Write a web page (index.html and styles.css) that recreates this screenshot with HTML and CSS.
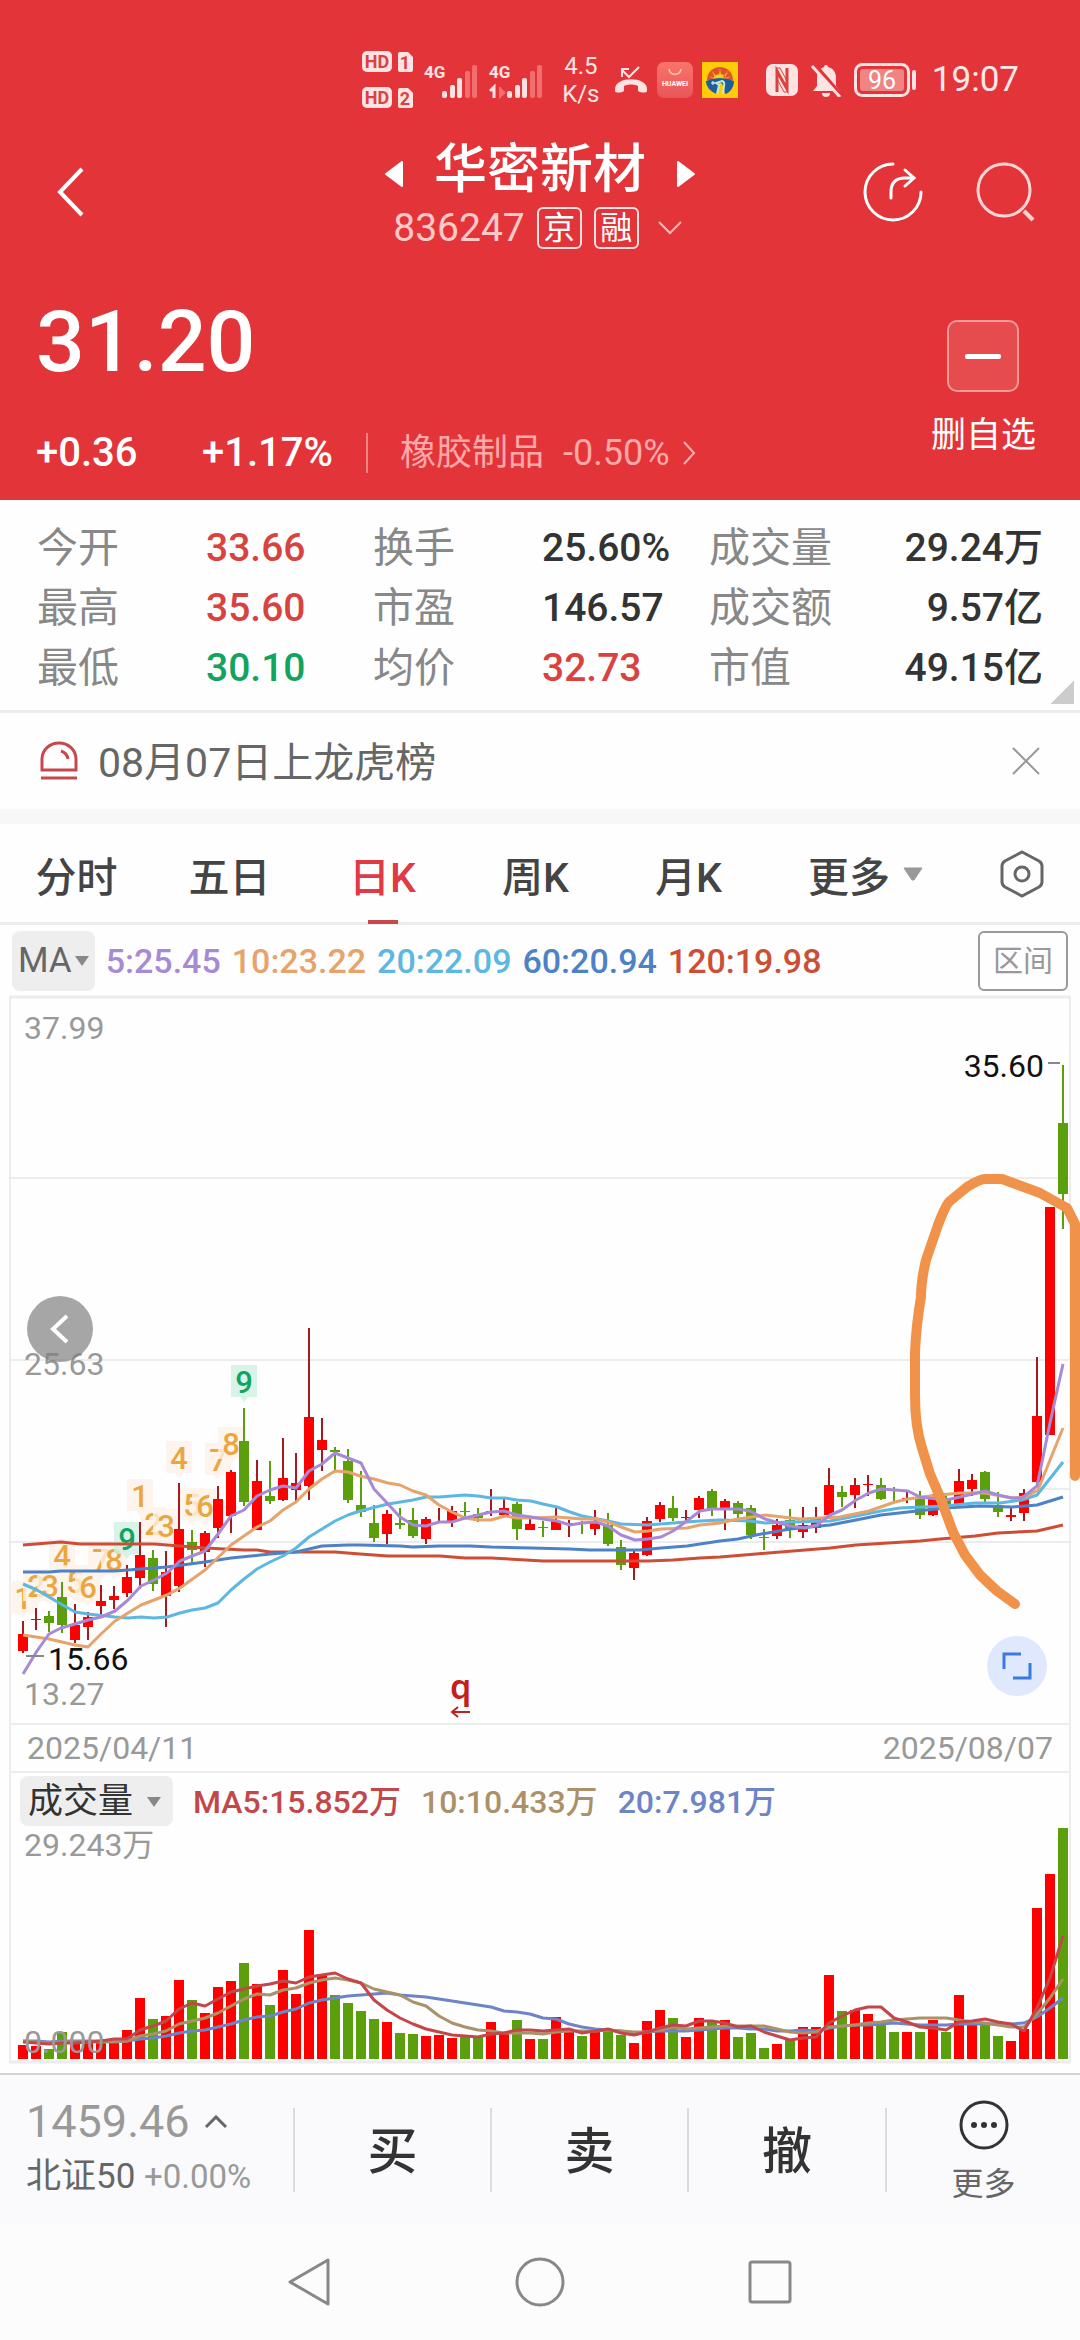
FILE: index.html
```html
<!DOCTYPE html>
<html lang="zh-CN">
<head>
<meta charset="utf-8">
<meta name="viewport" content="width=device-width, initial-scale=1">
<title>华密新材 836247</title>
<link rel="stylesheet" href="styles.css">
</head>
<body>
<header class="quote-head">
  <div class="status-bar">
    <svg class="st-hd" width="52" height="60" viewBox="0 0 52 60" aria-hidden="true">
      <rect x="0" y="1" width="30" height="21" rx="5" fill="#ffe3e3"/>
      <path d="M36 4a2 2 0 0 1 2-2h8l5 5v13a2 2 0 0 1-2 2H38a2 2 0 0 1-2-2z" fill="#ffe3e3"/>
      <rect x="0" y="37" width="30" height="21" rx="5" fill="#ffe3e3"/>
      <path d="M36 40a2 2 0 0 1 2-2h8l5 5v13a2 2 0 0 1-2 2H38a2 2 0 0 1-2-2z" fill="#ffe3e3"/>
      <g fill="#d8423f" font-size="18" font-weight="700" text-anchor="middle">
        <text x="15" y="18">HD</text><text x="43" y="19">1</text>
        <text x="15" y="54">HD</text><text x="43" y="55">2</text>
      </g>
    </svg>
    <svg class="st-sig" width="54" height="38" viewBox="0 0 54 38" aria-hidden="true">
      <text x="0" y="17" font-size="17" font-weight="700" fill="#ffe3e3">4G</text>
      <g fill="#ffe3e3"><rect x="18" y="30" width="5" height="7" rx="2"/><rect x="26" y="24" width="5" height="13" rx="2"/><rect x="33" y="17" width="5" height="20" rx="2"/></g>
      <g fill="#f16e6e"><rect x="41" y="10" width="5" height="27" rx="2"/><rect x="48" y="4" width="5" height="33" rx="2"/></g>
    </svg>
    <svg class="st-sig" width="54" height="38" viewBox="0 0 54 38" aria-hidden="true">
      <text x="0" y="17" font-size="17" font-weight="700" fill="#ffe3e3">4G</text>
      <path d="M5 37V26L1 30" fill="none" stroke="#ffe3e3" stroke-width="3"/><path d="M11 26v10l5-5" fill="#f16e6e" stroke="#f16e6e" stroke-width="2"/>
      <g fill="#ffe3e3"><rect x="18" y="30" width="5" height="7" rx="2"/><rect x="26" y="24" width="5" height="13" rx="2"/><rect x="33" y="17" width="5" height="20" rx="2"/></g>
      <g fill="#f16e6e"><rect x="41" y="10" width="5" height="27" rx="2"/><rect x="48" y="4" width="5" height="33" rx="2"/></g>
    </svg>
    <span class="st-speed">4.5<br>K/s</span>
    <svg class="st-call" width="34" height="30" viewBox="0 0 34 30" aria-hidden="true">
      <path d="M1 24c0-13 32-13 32 0v2c0 2-6 2-9 0v-5c-4-2-10-2-14 0v5c-3 2-9 2-9 0z" fill="#ffe3e3"/>
      <path d="M25 2L15 12 8 5M8 12V4h7" fill="none" stroke="#ffe3e3" stroke-width="2"/>
    </svg>
    <svg class="st-app" width="36" height="36" viewBox="0 0 36 36" aria-hidden="true">
      <defs><linearGradient id="hw" x2="0" y2="1"><stop stop-color="#fb7568"/><stop offset="1" stop-color="#e9555a"/></linearGradient></defs>
      <rect width="36" height="36" rx="7" fill="url(#hw)"/>
      <path d="M12 7c1 7 11 7 12 0" fill="none" stroke="#ffc9c3" stroke-width="1.5"/>
      <text x="18" y="24" font-size="7" font-weight="700" text-anchor="middle" fill="#fff">HUAWEI</text>
    </svg>
    <svg class="st-app2" width="36" height="36" viewBox="0 0 36 36" aria-hidden="true">
      <rect width="36" height="36" fill="#ffcc0c"/>
      <path d="M5 18a13 13 0 0 1 26 0z" fill="#e2522a"/>
      <path d="M11 18a7 6 0 0 1 14 0zM18 6l1 8h-2zM10 9l5 6-2 1zM26 9l-5 6 2 1zM7 14l7 3-1 1zM29 14l-7 3 1 1z" fill="#ffcc0c"/>
      <path d="M4 19q14-6 28 0c0 6-4 12-9 13l-2-8q-1-4-4-3l-2 11C8 30 4 24 4 19z" fill="#1c5f9c"/>
      <path d="M15 32l2-9-3-2 6-2q3 1 2 5l-1 8" fill="none" stroke="#c6e8d0" stroke-width="2"/>
      <path d="M9 21h4M11 19v4" stroke="#fff"/>
    </svg>
    <svg class="st-nfc" width="32" height="34" viewBox="0 0 32 34" aria-hidden="true">
      <rect y="1" width="32" height="32" rx="7" fill="#ffe3e3"/>
      <path d="M11 29V8l10 18V5" fill="none" stroke="#d8423f" stroke-width="3"/>
      <path d="M11 5h3l7 13v-8M21 29h-3l-7-13v8" fill="none" stroke="#d8423f" stroke-width="1"/>
    </svg>
    <svg class="st-bell" width="32" height="34" viewBox="0 0 32 34" aria-hidden="true">
      <path d="M3 28l4-5V15C7 8 11 5 14 4a2 2 0 0 1 4 0c4 1 8 4 8 11v8l4 5zM12 30h8a4 4 0 0 1-8 0z" fill="#ffe3e3"/>
      <path d="M4 1l28 32" stroke="#e33539" stroke-width="4"/><path d="M2 3l28 31" stroke="#ffe3e3" stroke-width="3"/>
    </svg>
    <svg class="st-bat" width="64" height="34" viewBox="0 0 64 34" aria-hidden="true">
      <rect x="1.500" y="1.500" width="53" height="31" rx="7" fill="none" stroke="#ffe3e3" stroke-width="3"/>
      <rect x="6" y="6" width="44" height="22" rx="3" fill="#f08482"/>
      <path d="M60 9v16" stroke="#ffe3e3" stroke-width="4" stroke-linecap="round"/>
      <text x="28" y="26" font-size="25" text-anchor="middle" fill="#fff">96</text>
    </svg>
    <time class="st-time">19:07</time>
  </div>

  <div class="title-bar">
    <button class="icon-btn back" aria-label="返回"><svg width="30" height="50" viewBox="0 0 30 50"><path d="M26 2L4 25l22 23" fill="none" stroke="#fff" stroke-width="4"/></svg></button>
    <div class="title">
      <div class="name-row">
        <button class="icon-btn" aria-label="上一只"><svg width="20" height="28" viewBox="0 0 20 28"><path d="M18 2v24L2 14z" fill="#fff" stroke="#fff" stroke-width="2" stroke-linejoin="round"/></svg></button>
        <h1>华密新材</h1>
        <button class="icon-btn" aria-label="下一只"><svg width="20" height="28" viewBox="0 0 20 28"><path d="M2 2v24l16-12z" fill="#fff" stroke="#fff" stroke-width="2" stroke-linejoin="round"/></svg></button>
      </div>
      <div class="code-row">
        <span class="code">836247</span><span class="mark">京</span><span class="mark">融</span>
        <svg width="26" height="16" viewBox="0 0 26 16"><path d="M2 2l11 11L24 2" fill="none" stroke="#ffb8b8" stroke-width="2"/></svg>
      </div>
    </div>
    <div class="tools">
      <button class="icon-btn" aria-label="分享"><svg width="60" height="60" viewBox="0 0 60 60"><path d="M30 2A28 28 0 1 0 58 30M28 36V30q0-14 14-14h8M42 8l9 8-9 8" fill="none" stroke="#fff" stroke-width="3" stroke-linecap="round"/></svg></button>
      <button class="icon-btn" aria-label="搜索"><svg width="60" height="60" viewBox="0 0 60 60"><circle cx="28" cy="28" r="26" fill="none" stroke="#ffd5d5" stroke-width="3"/><path d="M48 49l9 9" stroke="#ffd5d5" stroke-width="4"/></svg></button>
    </div>
  </div>

  <div class="price-row">
    <div class="price-col">
      <strong class="price">31.20</strong>
      <div class="change-row">
        <span class="chg">+0.36</span><span class="pct">+1.17%</span>
        <a class="sector" href="#sector"><span>橡胶制品</span><span class="sector-pct">-0.50%</span>
        <svg width="14" height="26" viewBox="0 0 14 26"><path d="M2 2l10 11L2 24" fill="none" stroke="#ffb0b0" stroke-width="2"/></svg></a>
      </div>
    </div>
    <button class="fav"><span class="fav-box"><span class="fav-bar"></span></span>删自选</button>
  </div>
</header>

<main>
  <section class="stats">
    <dl>
      <div><dt>今开</dt><dd class="up">33.66</dd></div>
      <div><dt>换手</dt><dd>25.60%</dd></div>
      <div><dt>成交量</dt><dd>29.24万</dd></div>
      <div><dt>最高</dt><dd class="up">35.60</dd></div>
      <div><dt>市盈</dt><dd>146.57</dd></div>
      <div><dt>成交额</dt><dd>9.57亿</dd></div>
      <div><dt>最低</dt><dd class="down">30.10</dd></div>
      <div><dt>均价</dt><dd class="up">32.73</dd></div>
      <div><dt>市值</dt><dd>49.15亿</dd></div>
    </dl>
  </section>

  <section class="notice">
    <svg width="38" height="40" viewBox="0 0 38 40" aria-hidden="true"><path d="M2 29V18a17 16 0 0 1 34 0v11zM1 37h36" fill="none" stroke="#c8474d" stroke-width="3"/><path d="M21 10q6 2 7 8" fill="none" stroke="#c8474d" stroke-width="3"/></svg>
    <span>08月07日上龙虎榜</span>
    <button class="icon-btn" aria-label="关闭"><svg width="28" height="28" viewBox="0 0 28 28"><path d="M1 1l26 26M27 1L1 27" stroke="#999" stroke-width="2"/></svg></button>
  </section>

  <nav class="tabs">
    <button>分时</button><button>五日</button><button class="active">日K</button><button>周K</button><button>月K</button>
    <button class="more">更多<svg width="22" height="14" viewBox="0 0 22 14"><path d="M2 1h18L12 13h-2z" fill="#999" stroke="#999" stroke-linejoin="round"/></svg></button>
    <button class="icon-btn gear" aria-label="设置"><svg width="44" height="48" viewBox="0 0 44 48"><path d="M22 2l17 9q3 2 3 5v16q0 3-3 5l-17 9-17-9q-3-2-3-5V16q0-3 3-5z" fill="none" stroke="#666" stroke-width="3"/><circle cx="22" cy="24" r="7" fill="none" stroke="#666" stroke-width="3"/></svg></button>
  </nav>

  <section class="ma-row">
    <button class="pill">MA<svg width="14" height="10" viewBox="0 0 14 10"><path d="M0 0h14L7 10z" fill="#888"/></svg></button>
    <span class="ma5">5:25.45</span><span class="ma10">10:23.22</span><span class="ma20">20:22.09</span><span class="ma60">60:20.94</span><span class="ma120">120:19.98</span>
    <button class="range">区间</button>
  </section>

  <section class="chart">
    <svg class="k-chart" viewBox="0 0 1080 729" role="img" aria-label="日K线图">
      <g fill="none" stroke="#ececec" stroke-width="2">
        <path d="M10 0V729M1070 0V729M10 182H1070M10 364H1070M1044 493H1070M10 546H1070M10 728H1070"/>
        <path d="M9 1H1071" stroke-width="3"/>
      </g>
      <g id="tags"></g>
      <g id="candles"></g>
      <g class="lines">
        <polyline stroke="#cc4f35" points="23,549 61,546 80,548 154,548 180,550 205,552 244,554 257,554 270,556 335,556 360,558 388,560 440,560 465,562 491,562 543,565 648,565 673,564 700,562 720,561 756,558 830,552 856,549 920,545 940,543 975,540 998,537 1037,535 1063,529"/>
        <polyline stroke="#4e82c6" points="23,576 49,576 61,575 115,575 141,573 167,571 205,566 231,562 270,558 296,556 322,550 348,549 360,549 400,550 413,551 439,550 470,550 491,551 531,552 570,553 590,554 640,554 661,552 687,550 700,548 720,545 738,543 756,539 790,533 830,529 856,524 881,519 908,516 945,512 980,510 1012,511 1037,509 1063,501"/>
        <polyline stroke="#5cb7e2" points="23,588 37,594 49,601 61,608 75,616 88,618 115,621 128,622 141,621 154,622 167,621 180,617 192,614 205,612 218,607 231,594 244,583 257,573 270,566 283,560 296,552 309,541 322,533 335,525 348,519 360,515 388,508 413,504 426,501 439,501 452,500 465,499 478,500 491,502 505,502 517,504 531,505 543,508 557,511 570,516 582,520 608,525 621,528 648,529 673,527 700,525 720,524 750,525 765,527 790,526 830,525 856,520 881,515 900,512 945,510 975,507 1000,507 1022,504 1037,499 1063,466"/>
        <polyline stroke="#e6a36c" points="23,639 49,643 75,649 88,651 101,638 115,625 141,609 167,599 180,592 205,574 231,549 257,531 270,525 283,514 296,506 309,493 322,483 335,475 348,476 360,480 374,483 388,487 400,489 413,495 426,499 439,509 452,516 465,522 478,524 491,524 505,520 517,522 531,522 557,521 582,523 596,523 608,526 621,531 635,536 648,535 661,533 687,532 700,529 720,527 738,523 765,519 800,523 840,521 869,515 895,506 908,503 930,500 960,497 985,497 1012,502 1025,501 1038,494 1050,464 1063,432"/>
        <polyline stroke="#a78ad6" points="23,678 37,655 49,638 61,632 75,628 88,624 101,621 115,615 128,604 141,590 154,584 167,577 180,565 192,560 205,555 218,538 231,520 244,514 257,500 270,494 283,490 296,492 309,475 322,468 335,457 348,462 361,467 374,493 388,508 400,521 413,529 426,530 439,526 452,526 465,522 478,519 491,516 504,515 517,519 531,521 543,523 557,525 570,529 582,527 596,526 608,530 621,539 635,544 648,543 661,541 673,535 687,525 700,515 712,513 720,513 738,513 750,515 765,523 790,530 805,532 817,529 830,519 842,514 856,504 869,497 881,493 895,494 908,495 920,501 946,504 960,501 985,495 998,499 1012,502 1022,502 1037,490 1050,427 1063,368"/>
      </g>
      <g class="axis" font-size="32" fill="#999">
        <text x="24" y="43">37.99</text>
        <text x="24" y="379">25.63</text>
        <text x="24" y="709">13.27</text>
      </g>
      <path d="M26 660h18M1048 67h12" stroke="#888" stroke-width="2"/>
      <g class="axis" font-size="32" fill="#111">
        <text x="48" y="674">15.66</text>
        <text x="1044" y="81" text-anchor="end">35.60</text>
      </g>
      <g fill="none" stroke="#c41f1f" stroke-width="2">
        <path d="M470 716h-18M458 711l-6 5 6 5"/>
      </g>
      <text class="q" x="450" y="703" font-size="34" fill="#c41f1f">q</text>
      <circle cx="60" cy="333" r="33" fill="#808080" fill-opacity=".7"/>
      <path d="M67 320L53 333l14 13" fill="none" stroke="#fff" stroke-width="4"/>
      <circle cx="1017" cy="670" r="30" fill="#dfe8fc"/>
      <path d="M1004 673V658h17M1013 682h17V667" fill="none" stroke="#3a7be0" stroke-width="3"/>
      <path d="M1015 608L997 595 980 579 965 559 953 536 940 501 930 478 922 452 Q915 430 915 400V357Q916 330 921 301Q921 285 926 264L938 229Q946 208 950 205L967 191Q980 183 985 183H1002L1040 197 1067 212 1075 228V480" fill="none" stroke="#f0924a" stroke-width="10" stroke-linecap="round" stroke-linejoin="round"/>
    </svg>
  </section>

  <div class="dates"><time>2025/04/11</time><time>2025/08/07</time></div>

  <section class="vol">
    <div class="vol-head">
      <button class="pill">成交量<svg width="14" height="10" viewBox="0 0 14 10"><path d="M0 0h14L7 10z" fill="#888"/></svg></button>
      <span class="vma5">MA5:15.852万</span><span class="vma10">10:10.433万</span><span class="vma20">20:7.981万</span>
    </div>
    <svg class="v-chart" viewBox="0 0 1080 236" role="img" aria-label="成交量图">
      <path d="M10 0V234M1070 0V234" stroke="#ececec" stroke-width="2"/>
      <path d="M9 234H1071" stroke="#ececec" stroke-width="3"/>
      <g id="bars"></g>
      <g id="vlines" class="lines"></g>
      <g class="axis" font-size="32" fill="#999"><text x="24" y="28">29.243万</text><text x="24" y="225">0.000</text></g>
    </svg>
  </section>
</main>

<footer>
  <div class="trade-bar">
    <button class="index"><span class="idx-val">1459.46<svg width="24" height="14" viewBox="0 0 24 14"><path d="M2 12L12 2l10 10" fill="none" stroke="#666" stroke-width="3"/></svg></span><span class="idx-name">北证50 <small>+0.00%</small></span></button>
    <button class="act">买</button><button class="act">卖</button><button class="act">撤</button>
    <button class="act-more"><svg width="50" height="50" viewBox="0 0 50 50"><circle cx="25" cy="25" r="23" fill="none" stroke="#333" stroke-width="3"/><g fill="#333"><circle cx="15" cy="25" r="3"/><circle cx="25" cy="25" r="3"/><circle cx="35" cy="25" r="3"/></g></svg>更多</button>
  </div>
  <nav class="sys-nav">
    <button class="icon-btn" aria-label="后退"><svg width="50" height="50" viewBox="0 0 50 50"><path d="M43 3v44L5 25z" fill="none" stroke="#888" stroke-width="3" stroke-linejoin="round"/></svg></button>
    <button class="icon-btn" aria-label="主页"><svg width="50" height="50" viewBox="0 0 50 50"><circle cx="25" cy="25" r="23" fill="none" stroke="#888" stroke-width="3"/></svg></button>
    <button class="icon-btn" aria-label="最近任务"><svg width="50" height="50" viewBox="0 0 50 50"><rect x="5" y="5" width="40" height="40" rx="2" fill="none" stroke="#888" stroke-width="3"/></svg></button>
  </nav>
</footer>
<script src="chart.js"></script>
</body>
</html>
```
FILE: styles.css
```css
* { box-sizing: border-box; }
body {
  margin: 0;
  min-height: 100vh;
  display: flex;
  flex-direction: column;
  background: #fefefe;
  color: #333;
  font-family: Roboto, "Noto Sans CJK SC", sans-serif;
  font-weight: 400;
}
button {
  border: 0;
  padding: 0;
  background: none;
  font: inherit;
  color: inherit;
}
svg { display: block; flex: none; }
.icon-btn { display: flex; align-items: center; justify-content: center; }

/* header */
.quote-head { padding-bottom: 20px; background: #e33539; color: #fff; }
.status-bar {
  display: flex;
  align-items: center;
  justify-content: flex-end;
  height: 140px;
  padding: 20px 61px 0 0;
}
.st-sig { margin-left: 11px; }
.st-hd { margin-right: -1px; }
.st-speed {
  width: 60px;
  margin-left: 8px;
  text-align: center;
  font-size: 24px;
  line-height: 28px;
  color: #ffe3e3;
}
.st-call { margin-left: 3px; }
.st-app { margin-left: 9px; }
.st-app2 { margin-left: 9px; }
.st-nfc { margin-left: 28px; }
.st-bell { margin-left: 12px; }
.st-bat { margin-left: 12px; }
.st-time { margin-left: 14px; font-size: 35px; line-height: 40px; color: #ffe9e9; }

.title-bar {
  display: grid;
  grid-template-columns: 1fr auto 1fr;
  height: 116px;
  align-items: start;
  padding: 0 44px;
}
.back { justify-self: start; margin: 27px 0 0 12px; }
.tools { display: flex; gap: 53px; justify-self: end; margin-top: 22px; }
.title { display: flex; flex-direction: column; align-items: center; }
.name-row { display: flex; align-items: center; gap: 30px; height: 60px; }
h1 { margin: 0; font-size: 53px; line-height: 60px; font-weight: 500; }
.name-row .icon-btn { margin-top: 8px; }
.code-row { display: flex; align-items: center; gap: 12px; height: 56px; padding-right: 4px; }
.code { font-size: 39px; line-height: 44px; color: #ffc9c9; }
.mark {
  width: 45px;
  height: 42px;
  border: 2px solid #ffe3e3;
  border-radius: 6px;
  font-size: 32px;
  line-height: 38px;
  text-align: center;
}
.code-row svg { margin-left: 6px; }

.price-row {
  display: flex;
  justify-content: space-between;
  padding: 36px 44px 0 36px;
}
.price { display: block; font-size: 86px; line-height: 100px; font-weight: 500; }
.change-row {
  display: flex;
  align-items: center;
  height: 44px;
  margin-top: 39px;
  font-size: 40px;
  line-height: 44px;
  font-weight: 500;
}
.chg { width: 166px; }
.pct { width: 164px; }
.sector {
  display: flex;
  align-items: center;
  gap: 12px;
  padding-left: 32px;
  border-left: 2px solid #f08482;
  color: #ffa9a9;
  font-size: 36px;
  line-height: 40px;
  font-weight: 400;
  text-decoration: none;
}
.sector-pct { margin-left: 7px; }
.fav {
  display: flex;
  flex-direction: column;
  align-items: center;
  gap: 24px;
  height: 160px;
  margin-top: 28px;
  font-size: 35px;
  line-height: 40px;
}
.fav-box {
  display: flex;
  align-items: center;
  justify-content: center;
  width: 72px;
  height: 72px;
  border: 2px solid #f19a9a;
  border-radius: 10px;
  background: #e64b4d;
}
.fav-bar { width: 36px; height: 5px; border-radius: 2px; background: #fff; }

/* key figures */
.stats {
  padding: 18px 37px 12px;
  border-bottom: 3px solid #ececec;
  background: linear-gradient(135deg, transparent 17px, #ccc 17px) no-repeat right 6px bottom 6px / 24px 24px;
}
.stats dl {
  display: grid;
  grid-template-columns: 336fr 336fr 334fr;
  margin: 0;
}
.stats dl > div { display: flex; height: 60px; line-height: 60px; }
.stats dt { width: 169px; font-size: 41px; color: #888; }
.stats dd { margin: 0; font-size: 39px; font-weight: 500; white-space: nowrap; }
.stats dl > div:nth-child(3n) { justify-content: space-between; }
.stats dl > div:nth-child(3n) dt { width: auto; }
.stats .up { color: #d8423f; }
.stats .down { color: #12a35f; }

.notice {
  display: flex;
  align-items: center;
  gap: 20px;
  height: 111px;
  padding: 0 40px;
  border-bottom: 15px solid #f7f7f7;
  font-size: 41px;
  line-height: 60px;
  color: #666;
}
.notice span { padding-top: 4px; }
.notice .icon-btn { margin-left: auto; }

.tabs {
  display: grid;
  grid-template-columns: repeat(5, 153fr) 235fr 44px;
  height: 101px;
  padding: 0 36px 0 0;
  border-bottom: 3px solid #ececec;
  font-size: 41px;
  font-weight: 500;
  color: #444;
}
.tabs button { display: flex; align-items: center; justify-content: center; height: 100px; }
.tabs .active {
  color: #e03a45;
  background: linear-gradient(#c8474d, #c8474d) no-repeat center bottom / 30px 4px;
}
.tabs .more { justify-content: flex-start; gap: 12px; padding-left: 43px; }

.ma-row {
  display: flex;
  align-items: center;
  gap: 11px;
  height: 71px;
  padding: 0 12px;
  font-size: 34px;
  line-height: 40px;
  font-weight: 500;
}
.pill {
  display: flex;
  align-items: center;
  border-radius: 8px;
  background: #eee;
}
.ma-row .pill { gap: 3px; height: 60px; padding: 0 6px; font-size: 35px; font-weight: 400; color: #666; }
.range {
  width: 90px;
  height: 60px;
  margin-left: auto;
  border: 2px solid #999;
  border-radius: 6px;
  font-size: 30px;
  font-weight: 400;
  color: #999;
}
.ma5 { color: #a78ad6; }
.ma10 { color: #e6a36c; }
.ma20 { color: #5cb7e2; }
.ma60 { color: #4e82c6; }
.ma120 { color: #cc4f35; }

/* charts */
.k-chart, .v-chart { width: 100%; height: auto; overflow: visible; }
.lines { fill: none; stroke-width: 3; stroke-linejoin: round; }
.q { font-family: "Noto Sans", sans-serif; font-weight: 600; }
.dates {
  display: flex;
  justify-content: space-between;
  margin: 0 9px;
  padding: 1px 16px 0;
  border: 2px solid #ececec;
  border-top: 0;
  font-size: 32px;
  line-height: 45px;
  color: #999;
}
.vol-head {
  display: flex;
  align-items: center;
  gap: 20px;
  height: 55px;
  margin: 0 9px;
  padding: 0 9px;
  border: solid #ececec;
  border-width: 0 2px;
  font-size: 32px;
  line-height: 44px;
  font-weight: 500;
}
.vol-head span { padding-top: 2px; }
.vol-head .pill { gap: 14px; height: 50px; padding: 2px 12px 0 8px; font-size: 35px; font-weight: 400; }
.vma5 { color: #c3474a; }
.vma10 { color: #ab9169; }
.vma20 { color: #6d84c6; }

/* bottom bars */
footer { margin-top: auto; }
.trade-bar {
  display: grid;
  grid-template-columns: 293fr 197fr 197fr 198fr 195fr;
  align-items: center;
  height: 151px;
  border-top: 2px solid #d4d4d6;
  background: #fafafc;
}
.index { padding-left: 26px; text-align: left; color: #666; }
.idx-val {
  display: flex;
  align-items: center;
  gap: 14px;
  font-size: 45px;
  line-height: 54px;
  color: #999;
}
.idx-name { display: block; font-size: 35px; line-height: 56px; }
.idx-name small { font-size: 33px; color: #999; }
.act {
  height: 84px;
  padding-top: 4px;
  border-left: 2px solid #dcdcdf;
  font-size: 50px;
  line-height: 80px;
  font-weight: 500;
}
.act-more {
  display: flex;
  flex-direction: column;
  align-items: center;
  gap: 4px;
  height: 84px;
  border-left: 2px solid #dcdcdf;
  font-size: 32px;
  line-height: 60px;
  color: #666;
}
.act-more svg { margin-top: -8px; }
.sys-nav {
  display: flex;
  justify-content: center;
  gap: 180px;
  height: 116px;
  padding-top: 33px;
  background: #fcfcfc;
}
.sys-nav .icon-btn { height: 50px; }
```
FILE: chart.js
```js
const STEP = 13, LEFT = 23, RED = '#ff0000', GREEN = '#5b9f0c';

// direction, high, body top, body bottom, low
const candles = `r625,638,655,657 r612,623,624,634 g615,620,627,636 g586,601,629,637 r608,629,644,647
r616,621,631,644 r589,605,610,620 r590,600,604,613 r569,581,597,601 r526,559,582,593
g554,562,588,595 r555,576,600,631 r487,533,590,596 g534,546,554,567 r535,537,556,571
r490,503,532,542 r474,476,520,537 g412,445,506,510 r464,485,534,534 g465,500,505,508
r442,482,504,505 r457,487,494,505 r332,421,490,504 r422,444,454,475 g451,454,456,476
g453,465,504,507 g475,509,516,521 g509,527,542,546 r514,518,538,548 g512,527,529,533
g512,524,540,542 r521,523,543,548 r512,526,527,527 r510,515,526,531 g506,515,516,520
g512,518,522,526 r493,515,516,520 r503,512,519,520 g506,508,533,544 r523,528,534,534
g525,531,532,541 r512,525,534,534 r524,527,528,541 g525,527,528,538 r514,526,533,539
g517,529,548,550 g544,551,569,574 r555,557,572,584 r521,525,559,560 r506,509,523,526
g500,512,522,525 r514,521,522,525 r500,502,514,522 g493,495,514,520 r503,505,512,534
g505,507,518,523 g509,512,539,543 g533,541,542,554 r523,529,540,543 g513,524,534,542
r511,529,536,542 r511,521,532,537 r472,489,519,520 g490,496,501,511 r482,489,499,512
r479,488,489,500 g482,489,503,504 g491,493,495,506 r495,502,503,507 g495,503,519,523
r498,501,519,520 g500,502,509,510 r473,485,508,510 r478,484,493,500 g475,476,503,506
g496,509,516,521 r512,519,521,525 r493,497,517,525 r361,420,486,487 r211,211,439,439
g69,127,198,233`.split(/\s+/).map(s => [s[0], ...s.slice(1).split(',').map(Number)]);

const volumes = [14,13,10,27,18,18,17,19,29,61,40,43,79,59,46,72,78,96,75,54,89,65,129,85,64,56,48,40,37,26,
  25,23,24,21,22,22,37,26,39,20,20,42,27,23,28,28,24,16,38,49,41,22,41,37,39,22,26,11,15,19,32,32,84,48,49,
  45,35,27,27,27,39,27,64,35,35,23,18,30,151,185,231];

// centre x, top y, digit; nine marks a finished count
const tags = [[23,585,1],[36,573,2],[50,573,3],[62,543,4],[75,569,5],[88,574,6],[101,547,7],[114,547,8],
  [127,526,9],[140,483,1],[153,511,2],[166,513,3],[179,445,4],[192,492,5],[205,493,6],[218,447,7],[231,431,8],[244,369,9]];

document.getElementById('tags').innerHTML = tags.map(([x, y, n]) => {
  const box = n === 9 ? '#d0f0e2' : '#fdf2e8', ink = n === 9 ? '#12a35f' : '#eba63f';
  return `<path d="M${x - 13} ${y}h26v32h-9l-4 5-4-5h-9z" fill="${box}" fill-opacity=".8"/>` +
    `<text x="${x}" y="${y + 28}" font-size="31" font-weight="500" text-anchor="middle" fill="${ink}">${n}</text>`;
}).join('');

document.getElementById('candles').innerHTML = candles.map(([c, hi, top, bottom, lo], i) => {
  const x = LEFT + i * STEP, red = c === 'r';
  return `<path d="M${x} ${hi}V${lo}" stroke="${red ? '#a8191e' : GREEN}" stroke-width="2"/>` +
    `<rect x="${x - 5}" y="${top}" width="10" height="${Math.max(1, bottom - top)}" fill="${red ? RED : GREEN}"/>`;
}).join('');

const BASE = 231;
document.getElementById('bars').innerHTML = volumes.map((v, i) =>
  `<rect x="${LEFT - 5 + i * STEP}" y="${BASE - v}" width="10" height="${v}" fill="${candles[i][0] === 'r' ? RED : GREEN}"/>`
).join('');

const padded = Array(20).fill(18).concat(volumes);
const average = n => volumes.map((_, i) => {
  const part = padded.slice(i + 21 - n, i + 21);
  return `${LEFT + i * STEP},${Math.round(BASE - part.reduce((a, b) => a + b) / n)}`;
}).join(' ');
document.getElementById('vlines').innerHTML = [[20, '#6d84c6'], [10, '#ab9169'], [5, '#c3474a']]
  .map(([n, color]) => `<polyline points="${average(n)}" stroke="${color}"/>`).join('');
```
